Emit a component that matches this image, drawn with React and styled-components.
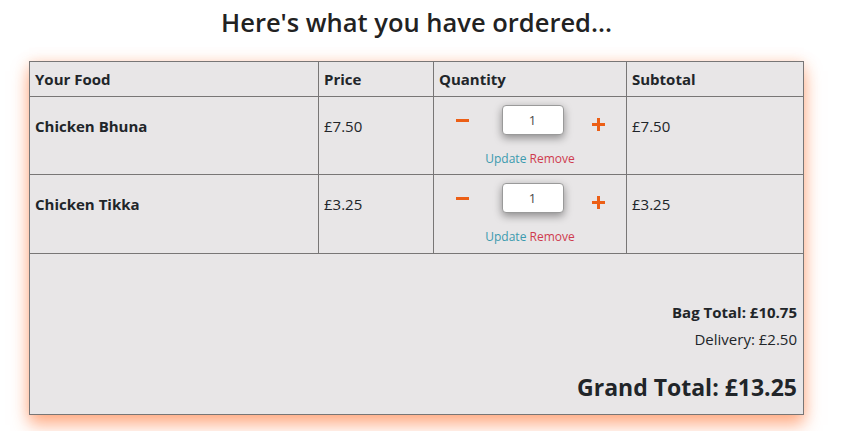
import React, { useState } from 'react';
import styled, { createGlobalStyle } from 'styled-components';

const GlobalStyle = createGlobalStyle`
    body {
        margin: 0;
        background: #ffffff;
        font-family: "Open Sans", "Noto Sans", sans-serif;
        color: #212529;
    }
`;

const items = [
    { id: 1, name: 'Chicken Bhuna', price: 7.5, qty: 1 },
    { id: 2, name: 'Chicken Tikka', price: 3.25, qty: 1 },
];

const money = (n) => `£${n.toFixed(2)}`;

const App = () => {
    const [bag] = useState(items);
    const bagTotal = bag.reduce((sum, i) => sum + i.price * i.qty, 0);
    const delivery = 2.5;

    return (
        <Page>
            <GlobalStyle />
            <Title>Here's what you have ordered...</Title>
            <Table>
                <colgroup>
                    <col style={{ width: "289px" }} />
                    <col style={{ width: "115px" }} />
                    <col style={{ width: "193px" }} />
                    <col />
                </colgroup>
                <thead>
                    <tr>
                        <Th>Your Food</Th>
                        <Th>Price</Th>
                        <Th>Quantity</Th>
                        <Th>Subtotal</Th>
                    </tr>
                </thead>
                <tbody>
                    {bag.map((item, index) => (
                        <tr key={item.id}>
                            <Td $bold $h={index === 0 ? 78 : 79}>{item.name}</Td>
                            <Td $h={index === 0 ? 78 : 79}>{money(item.price)}</Td>
                            <QtyTd>
                                <QtyRow>
                                    <Minus aria-label="decrease" />
                                    <QtyInput type="text" defaultValue={item.qty} />
                                    <Plus aria-label="increase" />
                                </QtyRow>
                                <Links>
                                    <LinkText $color="#3b9aae">Update</LinkText>{' '}
                                    <LinkText $color="#cf3b4e">Remove</LinkText>
                                </Links>
                            </QtyTd>
                            <Td $h={index === 0 ? 78 : 79}>{money(item.price * item.qty)}</Td>
                        </tr>
                    ))}
                    <tr>
                        <TotalsTd colSpan={4}>
                            <BagTotal>Bag Total: {money(bagTotal)}</BagTotal>
                            <Delivery>Delivery: {money(delivery)}</Delivery>
                            <Grand>Grand Total: {money(bagTotal + delivery)}</Grand>
                        </TotalsTd>
                    </tr>
                </tbody>
            </Table>
        </Page>
    );
};

const Page = styled.div`
    width: 775px;
    margin-left: 29px;
    padding-bottom: 20px;
`;
const Title = styled.h2`
    margin: 0;
    padding-top: 4px;
    height: 57px;
    text-align: center;
    font-size: 25.5px;
    font-weight: 600;
    line-height: 36px;
    color: #222;
`;
const Table = styled.table`
    width: 775px;
    table-layout: fixed;
    border-collapse: collapse;
    background: #e8e6e7;
    box-shadow: 0 10px 16px rgba(255, 105, 35, 0.5), 0 0 12px rgba(255, 140, 80, 0.25);
    font-size: 15px;
`;
const Th = styled.th`
    height: 35px;
    box-sizing: border-box;
    padding: 0 5px;
    border: 1px solid #787676;
    text-align: left;
    font-weight: 700;
`;
const Td = styled.td`
    height: ${(p) => p.$h}px;
    box-sizing: border-box;
    padding: 19px 5px 0;
    border: 1px solid #787676;
    vertical-align: top;
    line-height: 20px;
    font-weight: ${(p) => (p.$bold ? 700 : 400)};
`;
const QtyTd = styled.td`
    box-sizing: border-box;
    padding: 8px 0 0;
    border: 1px solid #787676;
    vertical-align: top;
    text-align: center;
`;
const QtyRow = styled.div`
    display: flex;
    align-items: flex-start;
    justify-content: center;
    height: 30px;
`;
const Minus = styled.span`
    width: 13px;
    height: 3px;
    margin: 14px 33px 0 0;
    background: #ec5f16;
`;
const Plus = styled.span`
    position: relative;
    width: 13px;
    height: 13px;
    margin: 13px 0 0 28px;
    &::before,
    &::after {
        content: "";
        position: absolute;
        background: #ec5f16;
    }
    &::before {
        left: 0;
        top: 5px;
        width: 13px;
        height: 3px;
    }
    &::after {
        left: 5px;
        top: 0;
        width: 3px;
        height: 13px;
    }
`;
const QtyInput = styled.input`
    width: 62px;
    height: 30px;
    box-sizing: border-box;
    margin: 0;
    border: 1px solid #9a9a9a;
    border-radius: 4px;
    box-shadow: 0 3px 8px rgba(0, 0, 0, 0.4);
    text-align: center;
    font-family: "Open Sans", sans-serif;
    font-size: 13px;
    color: #4a4a4a;
    background: #fff;
`;
const Links = styled.div`
    margin-top: 16px;
    font-size: 12px;
    line-height: 16px;
`;
const LinkText = styled.span`
    color: ${(p) => p.$color};
    cursor: pointer;
`;
const TotalsTd = styled.td`
    height: 161px;
    box-sizing: border-box;
    padding: 48px 6px 0;
    border: 1px solid #787676;
    vertical-align: top;
    text-align: right;
`;
const BagTotal = styled.div`
    font-weight: 700;
    line-height: 20px;
`;
const Delivery = styled.div`
    margin-top: 7px;
    line-height: 20px;
`;
const Grand = styled.div`
    margin-top: 22px;
    font-size: 23px;
    font-weight: 700;
    line-height: 32px;
`;

export default App;
